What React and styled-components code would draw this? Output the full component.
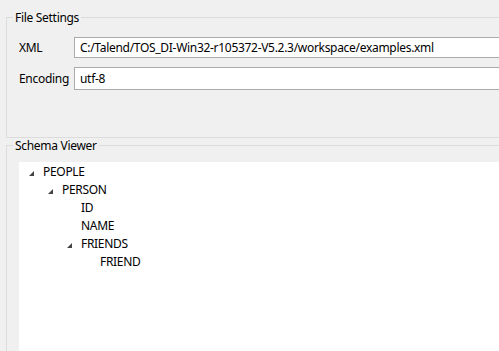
import React from 'react';
import styled, { createGlobalStyle } from 'styled-components';

const GlobalStyle = createGlobalStyle`
  html, body {
    margin: 0;
    padding: 0;
    background: #f0f0f0;
  }
  body {
    font-family: 'Noto Sans', 'Open Sans', sans-serif;
    font-size: 12px;
    letter-spacing: -0.3px;
    color: #000;
  }
`;

const Page = styled.div`
  width: 499px;
  height: 351px;
  overflow: hidden;
  background: #f0f0f0;
`;

const Group = styled.fieldset`
  margin: ${(p) => p.top}px 0 0 6px;
  padding: ${(p) => p.padTop}px 0 ${(p) => p.padBottom}px 12px;
  border: 1px solid #dcdcdc;
  border-right: none;
  min-width: 0;
`;

const Legend = styled.legend`
  margin-left: -6px;
  padding: 0 2px;
  line-height: 15px;
  font-size: 12px;
  color: #000;
`;

const Form = styled.div`
  display: grid;
  grid-template-columns: 55px 1fr;
  row-gap: 9px;
  align-items: center;
`;

const Label = styled.label`
  line-height: 15px;
  white-space: nowrap;
`;

const Field = styled.div`
  height: ${(p) => p.h}px;
  box-sizing: border-box;
  border: 1px solid #ababab;
  border-right: none;
  background: #fff;
  padding-left: 5px;
  display: flex;
  align-items: center;
  white-space: nowrap;
  overflow: hidden;
`;

const Tree = styled.div`
  background: #fff;
  height: 220px;
`;

const Row = styled.div`
  height: 18px;
  display: flex;
  align-items: center;
  padding-left: ${(p) => 10 + p.level * 19}px;
  white-space: nowrap;
`;

const Expander = styled.span`
  width: 14px;
  flex: none;
  display: flex;
  margin-top: 4px;
`;

function Arrow() {
  return (
    <svg width="5" height="5" viewBox="0 0 5 5">
      <polygon points="5,0 5,5 0,5" fill="#444" />
    </svg>
  );
}

const nodes = [
  { label: 'PEOPLE', level: 0, open: true },
  { label: 'PERSON', level: 1, open: true },
  { label: 'ID', level: 2 },
  { label: 'NAME', level: 2 },
  { label: 'FRIENDS', level: 2, open: true },
  { label: 'FRIEND', level: 3 },
];

export default function App() {
  return (
    <Page>
      <GlobalStyle />
      <Group top={10} padTop={12} padBottom={47}>
        <Legend>File Settings</Legend>
        <Form>
          <Label>XML</Label>
          <Field h={21}>C:/Talend/TOS_DI-Win32-r105372-V5.2.3/workspace/examples.xml</Field>
          <Label>Encoding</Label>
          <Field h={23}>utf-8</Field>
        </Form>
      </Group>
      <Group top={0} padTop={9} padBottom={0}>
        <Legend>Schema Viewer</Legend>
        <Tree>
          {nodes.map((n) => (
            <Row key={n.label} level={n.level}>
              <Expander>{n.open && <Arrow />}</Expander>
              {n.label}
            </Row>
          ))}
        </Tree>
      </Group>
    </Page>
  );
}
